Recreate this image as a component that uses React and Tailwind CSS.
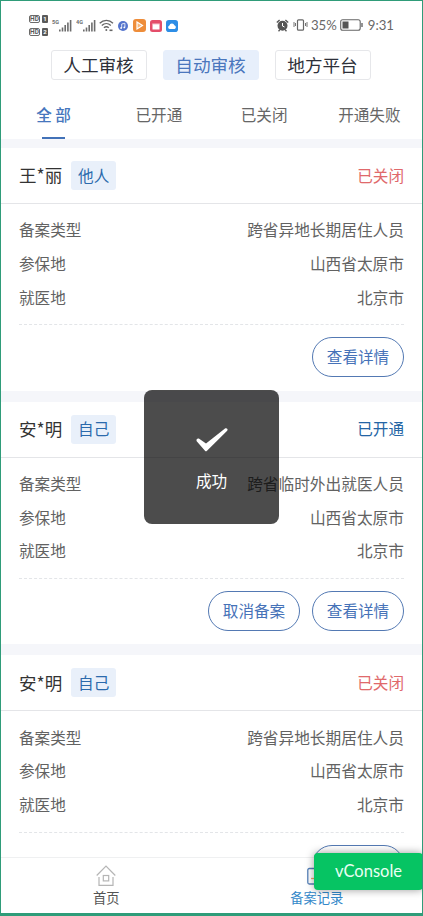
import React, { useState } from 'react';

const modes = ['人工审核', '自动审核', '地方平台'];
const tabs = ['全 部', '已开通', '已关闭', '开通失败'];

const records = [
  {
    id: 1,
    name: '王*丽',
    relation: '他人',
    status: '已关闭',
    type: '跨省异地长期居住人员',
    insured: '山西省太原市',
    hospital: '北京市',
    cancelable: false,
  },
  {
    id: 2,
    name: '安*明',
    relation: '自己',
    status: '已开通',
    type: '跨省临时外出就医人员',
    insured: '山西省太原市',
    hospital: '北京市',
    cancelable: true,
  },
  {
    id: 3,
    name: '安*明',
    relation: '自己',
    status: '已关闭',
    type: '跨省异地长期居住人员',
    insured: '山西省太原市',
    hospital: '北京市',
    cancelable: false,
  },
];

const Signal = ({ label }) => (
  <svg width="20" height="14" viewBox="0 0 20 14" fill="#6c6c6c">
    <text x="0" y="5" fontSize="5.5" fontWeight="700" fontFamily="Roboto, sans-serif">{label}</text>
    <rect x="7" y="10.5" width="1.6" height="2" />
    <rect x="9.7" y="8.5" width="1.6" height="4" />
    <rect x="12.4" y="6" width="1.6" height="6.5" />
    <rect x="15.1" y="3.5" width="1.6" height="9" />
    <rect x="17.8" y="1" width="1.6" height="11.5" />
  </svg>
);

const HdBadge = ({ num }) => (
  <div className="flex gap-[2px] font-[Roboto,sans-serif] text-[6.5px] font-bold leading-none text-[#5a5a5a]">
    <span className="flex h-[8px] w-[11px] items-center justify-center rounded-[2px] border border-[#6a6a6a]">HD</span>
    <span className="flex h-[8px] w-[6px] items-center justify-center rounded-[1px] bg-[#5a5a5a] text-[6px] text-white">{num}</span>
  </div>
);

const StatusBar = () => (
  <div className="flex h-[49px] shrink-0 items-center justify-between pl-[28px] pr-[28px] font-[Lato,sans-serif]">
    <div className="flex items-center">
      <div className="flex flex-col gap-[5px]">
        <HdBadge num="1" />
        <HdBadge num="2" />
      </div>
      <div className="ml-[4px] flex gap-[4px]">
        <Signal label="5G" />
        <Signal label="4G" />
      </div>
      <svg className="ml-[3px]" width="15" height="13" viewBox="0 0 15 13" fill="none" stroke="#666" strokeWidth="1.3">
        <path d="M.7 4.2C4.6.4 10.2.4 14 4.2M2.8 6.5c2.7-2.5 6.4-2.5 9 0M4.9 8.8c1.5-1.3 3.4-1.3 4.9 0" />
        <circle cx="7.3" cy="11" r="1" fill="#666" stroke="none" />
        <path d="M10.5 11.3h3" strokeWidth="1.6" />
      </svg>
      <svg className="ml-[4px]" width="10" height="10" viewBox="0 0 10 10">
        <circle cx="5" cy="5" r="5" fill="#5474cd" />
        <path d="M3.7 7V3l3.2-.7v4" fill="none" stroke="#fff" strokeWidth=".8" />
        <circle cx="3.1" cy="7" r=".9" fill="#fff" />
        <circle cx="6.3" cy="6.4" r=".9" fill="#fff" />
      </svg>
      <svg className="ml-[5px]" width="13" height="13" viewBox="0 0 13 13">
        <rect width="13" height="13" rx="3" fill="#ee8d3a" />
        <path d="M4 3l5.5 3.5L4 10z" fill="#f7b77b" stroke="#fff" strokeWidth="1.2" />
      </svg>
      <svg className="ml-[4px]" width="12" height="12" viewBox="0 0 12 12">
        <rect width="12" height="12" rx="2.5" fill="#e44e6a" />
        <path d="M2.5 3.5h7v6h-7z" fill="#fff" />
        <path d="M4 2.5v2M6 2.5v2M8 2.5v2" stroke="#e44e6a" strokeWidth=".7" />
      </svg>
      <svg className="ml-[4px]" width="12" height="12" viewBox="0 0 12 12">
        <rect width="12" height="12" rx="2.8" fill="#2e8ee6" />
        <path d="M3.6 9a1.8 1.8 0 0 1-.2-3.5 2.6 2.6 0 0 1 5-.3A2 2 0 0 1 8.600 9z" fill="#fff" />
      </svg>
    </div>
    <div className="flex items-center text-[13.2px] text-[#686868]">
      <svg width="13" height="13" viewBox="0 0 13 13">
        <circle cx="6.5" cy="6.8" r="5" fill="#555" />
        <path d="M.8 3.5L3.6 1M12.2 3.5L9.4 1M2.5 12.3l1.2-1.2M10.5 12.3l-1.2-1.2" stroke="#555" strokeWidth="1.4" />
        <path d="M6.5 4v3l2 1" fill="none" stroke="#fff" strokeWidth="1" />
      </svg>
      <svg className="ml-[4px]" width="15" height="12" viewBox="0 0 15 12" fill="none" stroke="#666">
        <rect x="4.5" y=".8" width="6" height="10.4" rx="1" strokeWidth="1.2" />
        <path d="M1 3v5M2.5 4v3M14 3v5M12.500 4v3" strokeWidth=".9" />
      </svg>
      <span className="ml-[3px]">35%</span>
      <svg className="ml-[3px]" width="24" height="12" viewBox="0 0 24 12">
        <rect x=".7" y=".7" width="19.5" height="10.6" rx="2" fill="none" stroke="#666" strokeWidth="1.1" />
        <rect x="2.5" y="2.5" width="6" height="7" fill="#555" />
        <path d="M22 4v4" stroke="#666" strokeWidth="1.4" />
      </svg>
      <span className="ml-[4px]">9:31</span>
    </div>
  </div>
);

const InfoRow = ({ label, value }) => (
  <div className="flex h-[33.6px] items-center justify-between">
    <span>{label}</span>
    <span className="text-[15.7px]">{value}</span>
  </div>
);

const PillButton = ({ children }) => (
  <button className="h-[40px] w-[92px] rounded-full border border-[#5379b3] text-[15.6px] text-[#4672b8]">
    {children}
  </button>
);

const RecordCard = ({ record }) => (
  <div className="h-[253.7px] shrink-0 border-b-[11px] border-[#f5f6fa] text-[15.6px] text-[#626262]">
    <div className="flex h-[56px] items-center border-b border-[#e4e5e8] pl-[18px] pr-[18px]">
      <span className="text-[17.5px] text-[#333]">{record.name}</span>
      <span className="ml-[9px] flex h-[29px] w-[45px] items-center justify-center rounded-[3px] bg-[#e9f0fa] text-[#2b6aac]">
        {record.relation}
      </span>
      <span className={`ml-auto ${record.status === '已开通' ? 'text-[#2465a5]' : 'text-[#e0696b]'}`}>
        {record.status}
      </span>
    </div>
    <div className="ml-[18px] mr-[18px] border-b border-dashed border-[#e3e5e8] pb-[10px] pt-[9.4px]">
      <InfoRow label="备案类型" value={record.type} />
      <InfoRow label="参保地" value={record.insured} />
      <InfoRow label="就医地" value={record.hospital} />
    </div>
    <div className="flex justify-end gap-[12px] pr-[18px] pt-[12px]">
      {record.cancelable && <PillButton>取消备案</PillButton>}
      <PillButton>查看详情</PillButton>
    </div>
  </div>
);

const Toast = () => (
  <div className="absolute left-[143px] top-[389px] flex h-[134px] w-[135px] flex-col items-center rounded-lg bg-black/70 text-white">
    <svg className="mt-[37px]" width="34" height="26" viewBox="0 0 34 26">
      <path
        d="M1.7 14.2c-.9-1.600.8-3.300 2.500-2.400L11 16.500 30 1.500c1.500-1 3.500.7 2.200 2.200L12 23.800c-.7.7-1.400.7-2 0z"
        fill="#fff"
      />
    </svg>
    <span className="mt-[15px] text-[15.6px] leading-6">成功</span>
  </div>
);

const App = () => {
  const [mode, setMode] = useState(1);
  const [tab, setTab] = useState(0);

  return (
    <div className="relative flex h-[916px] w-[423px] flex-col overflow-hidden border border-b-[3px] border-[#2f9c79] bg-white font-['Noto_Sans_CJK_SC',sans-serif]">
      <StatusBar />

      <div className="flex h-[30px] shrink-0 justify-center gap-[16px] pr-[2px]">
        {modes.map((item, index) => (
          <button
            key={item}
            onClick={() => setMode(index)}
            className={`w-[96px] rounded-[3px] border text-[17.6px] leading-none ${
              mode === index ? 'border-[#e7effb] bg-[#e7effb] text-[#4a76bd]' : 'border-[#e6e7ea] text-[#2d3039]'
            }`}
          >
            {item}
          </button>
        ))}
      </div>

      <div className="z-10 flex h-[59px] shrink-0">
        {tabs.map((item, index) => (
          <button
            key={item}
            onClick={() => setTab(index)}
            className={`flex flex-1 flex-col items-center justify-end text-[15.6px] ${
              tab === index ? 'font-medium text-[#4676bd]' : 'text-[#666]'
            }`}
          >
            <span className="mb-[11px] leading-6">{item}</span>
            <span className={`h-[2px] w-[23px] ${tab === index ? 'bg-[#4272b8]' : ''}`} />
          </button>
        ))}
      </div>

      <div className="flex min-h-0 flex-1 flex-col overflow-hidden border-t-[9px] border-[#f5f6fa]">
        {records.map((record) => (
          <RecordCard key={record.id} record={record} />
        ))}
      </div>

      <div className="flex h-[56px] shrink-0 border-t border-[#eff0f1] bg-white text-[13.3px] text-[#555]">
        <div className="flex flex-1 flex-col items-center pt-[7px]">
          <svg width="20" height="22" viewBox="0 0 20 22" fill="none" stroke="#b5b5b5" strokeWidth="1.2">
            <path d="M.7 10.5L10 1.200l9.300 9.300M3 12v8.300h14V12" />
            <rect x="7.3" y="10.5" width="5.4" height="5.4" />
          </svg>
          <span className="mt-px leading-5">首页</span>
        </div>
        <div className="flex flex-1 flex-col items-center pt-[7px] text-[#3388c9]">
          <svg width="20" height="22" viewBox="0 0 20 22" fill="none" stroke="#5580b8" strokeWidth="1.3">
            <rect x="0.8" y="3.5" width="17" height="15.5" rx="1.5" />
            <path d="M4 13.500h8" stroke="#eda46d" />
          </svg>
          <span className="mt-px leading-5">备案记录</span>
        </div>
      </div>

      <Toast />

      <button className="absolute bottom-[23px] right-[-1px] h-[37px] w-[109px] rounded-[4px] bg-[#06c463] font-[Lato,sans-serif] text-[16.5px] text-[#eafff3] shadow-[0_0_9px_rgba(0,0,0,0.4)]">
        vConsole
      </button>
    </div>
  );
};

export default App;
